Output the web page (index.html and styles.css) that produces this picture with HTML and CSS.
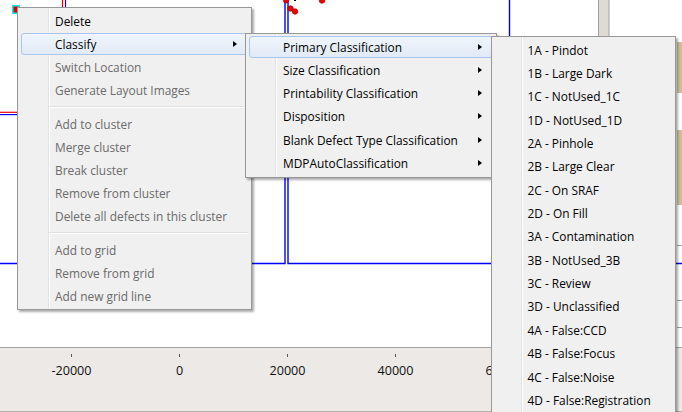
FILE: index.html
```html
<!DOCTYPE html>
<html>
<head>
<meta charset="utf-8">
<link rel="stylesheet" href="styles.css">
</head>
<body>
<div class="screen">
  <div class="plot">
    <svg class="plot-svg" width="682" height="347" viewBox="0 0 682 347">
      <rect x="12" y="5" width="8" height="9" fill="#00f0f0"/>
      <rect x="13.5" y="6.5" width="5" height="6" fill="#e00000"/>
      <line x1="62.5" y1="0" x2="62.5" y2="8" stroke="#f00000" stroke-width="1.2"/>
      <line x1="65.5" y1="0" x2="65.5" y2="8" stroke="#0000ff" stroke-width="1.2"/>
      <line x1="0" y1="112.3" x2="18" y2="112.3" stroke="#f00000" stroke-width="1.2"/>
      <line x1="0" y1="114.6" x2="18" y2="114.6" stroke="#0000ff" stroke-width="1.2"/>
      <polyline points="0,263.5 285,263.5 285,0" fill="none" stroke="#0000ff" stroke-width="1.4"/>
      <polyline points="288,0 288,263.5 682,263.5" fill="none" stroke="#0000ff" stroke-width="1.4"/>
      <line x1="509.5" y1="0" x2="509.5" y2="263.5" stroke="#0000ff" stroke-width="1.4"/>
      <g fill="#f00000" stroke="#900000" stroke-width="0.6">
        <circle cx="286" cy="0.5" r="2.6"/>
        <circle cx="290.5" cy="8.5" r="2.8"/>
        <circle cx="295" cy="11.5" r="2.8"/>
        <circle cx="322" cy="0.5" r="2.8"/>
      </g>
      <rect x="294" y="-1" width="2" height="2" fill="#000"/>
      <rect x="598.5" y="-1" width="10.5" height="60" fill="#dedbd7" stroke="#a3a09c"/>
      <rect x="677" y="42" width="6" height="51" fill="#cdbf92"/>
      <rect x="677" y="130" width="6" height="75" fill="#cdbf92"/>
      <line x1="677" y1="245.5" x2="682" y2="245.5" stroke="#a0a0a0"/>
      <line x1="677" y1="300.5" x2="682" y2="300.5" stroke="#a0a0a0"/>
      <line x1="677" y1="327.5" x2="682" y2="327.5" stroke="#a0a0a0"/>
    </svg>
  </div>
  <div class="axis">
    <div class="ticks">
      <div class="tick"><span class="mark"></span><span class="lbl">-20000</span></div>
      <div class="tick"><span class="mark"></span><span class="lbl">0</span></div>
      <div class="tick"><span class="mark"></span><span class="lbl">20000</span></div>
      <div class="tick"><span class="mark"></span><span class="lbl">40000</span></div>
      <div class="tick"><span class="mark"></span><span class="lbl">60000</span></div>
    </div>
  </div>

  <div class="menu menu-main">
    <div class="item">Delete</div>
    <div class="item hot sub">Classify</div>
    <div class="item off">Switch Location</div>
    <div class="item off">Generate Layout Images</div>
    <div class="sep"></div>
    <div class="item off">Add to cluster</div>
    <div class="item off">Merge cluster</div>
    <div class="item off">Break cluster</div>
    <div class="item off">Remove from cluster</div>
    <div class="item off">Delete all defects in this cluster</div>
    <div class="sep"></div>
    <div class="item off">Add to grid</div>
    <div class="item off">Remove from grid</div>
    <div class="item off">Add new grid line</div>
  </div>

  <div class="menu menu-classify">
    <div class="item hot sub">Primary Classification</div>
    <div class="item sub">Size Classification</div>
    <div class="item sub">Printability Classification</div>
    <div class="item sub">Disposition</div>
    <div class="item sub">Blank Defect Type Classification</div>
    <div class="item sub">MDPAutoClassification</div>
  </div>

  <div class="menu menu-primary">
    <div class="item">1A - Pindot</div>
    <div class="item">1B - Large Dark</div>
    <div class="item">1C - NotUsed_1C</div>
    <div class="item">1D - NotUsed_1D</div>
    <div class="item">2A - Pinhole</div>
    <div class="item">2B - Large Clear</div>
    <div class="item">2C - On SRAF</div>
    <div class="item">2D - On Fill</div>
    <div class="item">3A - Contamination</div>
    <div class="item">3B - NotUsed_3B</div>
    <div class="item">3C - Review</div>
    <div class="item">3D - Unclassified</div>
    <div class="item">4A - False:CCD</div>
    <div class="item">4B - False:Focus</div>
    <div class="item">4C - False:Noise</div>
    <div class="item">4D - False:Registration</div>
  </div>
</div>
</body>
</html>
```
FILE: styles.css
```css
html, body {
  margin: 0;
  padding: 0;
  background: #ffffff;
}

.screen {
  position: relative;
  width: 682px;
  height: 412px;
  overflow: hidden;
  font-family: "Open Sans", "Noto Sans", sans-serif;
}

.plot {
  height: 347px;
  background: #ffffff;
  border-bottom: 1px solid #a2a2a2;
}

.plot-svg {
  display: block;
}

.axis {
  height: 63px;
  background: #ece9e6;
  border-bottom: 1px solid #b4b1ae;
}

.ticks {
  display: flex;
  padding-left: 17.5px;
}

.tick {
  width: 108px;
  flex: none;
  display: flex;
  flex-direction: column;
  align-items: center;
}

.mark {
  display: block;
  width: 1px;
  height: 3px;
  margin-top: 6px;
  background: #555;
}

.lbl {
  display: block;
  margin-top: 4.5px;
  font-size: 12.6px;
  line-height: 17px;
  color: #111;
}

/* ---------- context menus ---------- */
.menu {
  --gutter: 29px;
  --text: 33px;
  --gap: 1.25px;
  position: absolute;
  box-sizing: border-box;
  border: 1px solid #979797;
  padding: 1.7px 0 1.5px;
  font-size: 11.9px;
  color: #000;
  box-shadow: 2px 2px 2px rgba(0, 0, 0, 0.32);
  background:
    linear-gradient(to right,
      transparent var(--gutter),
      #e2e3e3 var(--gutter), #e2e3e3 calc(var(--gutter) + 1px),
      #ffffff calc(var(--gutter) + 1px), #ffffff calc(var(--gutter) + 2px),
      transparent calc(var(--gutter) + 2px)),
    #f0f0f0;
}

.menu-main {
  --gutter: 30px;
  --text: 33px;
  --gap: 1px;
  left: 17px;
  top: 7px;
  width: 235px;
  z-index: 1;
}

.menu-classify {
  --gutter: 29px;
  --text: 33px;
  --gap: 1.25px;
  left: 245px;
  top: 33px;
  width: 252px;
  z-index: 2;
}

.menu-primary {
  --gutter: 29px;
  --text: 31.5px;
  --gap: 1.35px;
  left: 491px;
  top: 36px;
  width: 185px;
  height: 400px;
  z-index: 3;
}

.item {
  position: relative;
  box-sizing: border-box;
  height: 22px;
  margin: 0 3px var(--gap);
  padding-left: var(--text);
  border: 1px solid transparent;
  border-radius: 3px;
  line-height: 20px;
  white-space: nowrap;
}

.item.off {
  color: #6b6b6b;
}

.item.hot {
  border-color: #a8c6ed;
  background: linear-gradient(#f0f5fb, #e1eaf6);
}

.item.sub::after {
  content: "";
  position: absolute;
  right: 10px;
  top: 7px;
  border-left: 4px solid #000;
  border-top: 3.5px solid transparent;
  border-bottom: 3.5px solid transparent;
}

.sep {
  height: 11px;
  display: flex;
  align-items: center;
}

.sep::before {
  content: "";
  flex: 1;
  margin: 0 3px 0 calc(var(--gutter) + 1px);
  height: 0;
  border-top: 1px solid #e0e0e0;
  border-bottom: 1px solid #ffffff;
}
```
